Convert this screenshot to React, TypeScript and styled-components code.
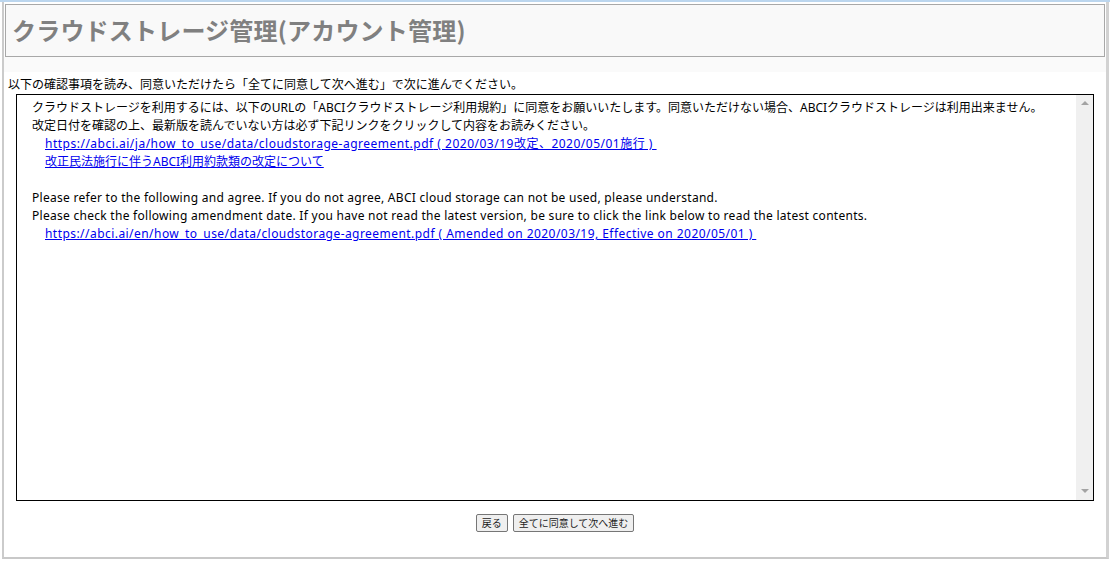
import styled, { createGlobalStyle } from 'styled-components';

const GlobalStyle = createGlobalStyle`
  html, body {
    margin: 0;
    padding: 0;
    background: #ffffff;
  }
  body {
    font-family: "Noto Sans", "Noto Sans CJK JP", sans-serif;
    font-size: 12px;
    color: #000;
  }
`;

const JA_URL = 'https://abci.ai/ja/how_to_use/data/cloudstorage-agreement.pdf';
const EN_URL = 'https://abci.ai/en/how_to_use/data/cloudstorage-agreement.pdf';

export default function App() {
  return (
    <>
      <GlobalStyle />
      <Page>
        <Frame>
          {/* タイトル */}
          <Header>
            <Title>クラウドストレージ管理(アカウント管理)</Title>
          </Header>
          <Band />

          {/* 本文 */}
          <Content>
            <Lead>以下の確認事項を読み、同意いただけたら「全てに同意して次へ進む」で次に進んでください。</Lead>
            <AgreementBox>
              <AgreementText>
                <Line>
                  クラウドストレージを利用するには、以下のURLの「ABCIクラウドストレージ利用規約」に同意をお願いいたします。同意いただけない場合、ABCIクラウドストレージは利用出来ません。
                </Line>
                <Line>改定日付を確認の上、最新版を読んでいない方は必ず下記リンクをクリックして内容をお読みください。</Line>
                <LinkLine>
                  <DocLink href="#" $spacing={0.5}>{JA_URL} ( 2020/03/19改定、2020/05/01施行 ) </DocLink>
                </LinkLine>
                <LinkLine>
                  <DocLink href="#">改正民法施行に伴うABCI利用約款類の改定について</DocLink>
                </LinkLine>
                <Line>&nbsp;</Line>
                <Line $spacing={0.28}>
                  Please refer to the following and agree. If you do not agree, ABCI cloud storage can not be used, please understand.
                </Line>
                <Line $spacing={0.28}>
                  Please check the following amendment date. If you have not read the latest version, be sure to click the link below to read the latest contents.
                </Line>
                <LinkLine>
                  <DocLink href="#" $spacing={0.45}>{EN_URL} ( Amended on 2020/03/19, Effective on 2020/05/01 ) </DocLink>
                </LinkLine>
              </AgreementText>
              <ScrollBar>
                <Arrow $dir="up" />
                <Arrow $dir="down" />
              </ScrollBar>
            </AgreementBox>

            <Actions>
              <Button type="button">戻る</Button>
              <Button type="button">全てに同意して次へ進む</Button>
            </Actions>
          </Content>
        </Frame>
      </Page>
    </>
  );
}

const Page = styled('div')`
  width: 1110px;
  height: 561px;
  border-top: 2px solid #bcd6ee;
  box-sizing: border-box;
`;

const Frame = styled('div')`
  margin-left: 2px;
  width: 1107px;
  height: 557px;
  box-sizing: border-box;
  border-left: 2px solid #cbcbcb;
  border-right: 3px solid #d2d2d2;
  border-bottom: 2px solid #c8c8c8;
  display: flex;
  flex-direction: column;
`;

const Header = styled('div')`
  margin: 2px 0 0 1px;
  width: 1100px;
  height: 53px;
  box-sizing: border-box;
  border: 1px solid #a8a8a8;
  background: #f9f9f9;
  display: flex;
  align-items: center;
  padding: 0 0 2px 6px;
`;

const Title = styled('h1')`
  margin: 0;
  font-family: "Noto Sans CJK JP", sans-serif;
  font-size: 24px;
  font-weight: 700;
  letter-spacing: 0.2px;
  color: #808080;
`;

const Band = styled('div')`
  height: 15px;
  background: #fafafa;
`;

const Content = styled('div')`
  flex: 1;
  display: flex;
  flex-direction: column;
  padding: 4px 0 0 4px;
`;

const Lead = styled('p')`
  margin: 0;
  height: 18px;
  line-height: 16px;
  font-family: "Noto Sans CJK JP", sans-serif;
  font-size: 12px;
`;

const AgreementBox = styled('div')`
  margin-left: 8px;
  width: 1078px;
  height: 407px;
  box-sizing: border-box;
  border: 1px solid #000;
  display: flex;
  background: #fff;
`;

const AgreementText = styled('div')`
  flex: 1;
  padding: 4px 0 0 15px;
  font-size: 12px;
  line-height: 18px;
`;

const Line = styled('div')<{ $spacing?: number }>`
  white-space: nowrap;
  letter-spacing: ${({ $spacing }) => $spacing ?? 0}px;
`;

const LinkLine = styled(Line)`
  padding-left: 13px;
`;

const DocLink = styled('a')<{ $spacing?: number }>`
  color: #0000ee;
  text-decoration: underline;
  white-space: pre;
  letter-spacing: ${({ $spacing }) => $spacing ?? 0}px;
`;

const ScrollBar = styled('div')`
  width: 17px;
  background: #f0f0f0;
  display: flex;
  flex-direction: column;
  justify-content: space-between;
  align-items: center;
  padding: 6px 0 7px;
`;

const Arrow = styled('div')<{ $dir: 'up' | 'down' }>`
  width: 0;
  height: 0;
  border-left: 4px solid transparent;
  border-right: 4px solid transparent;
  ${({ $dir }) =>
    $dir === 'up'
      ? 'border-bottom: 4px solid #a3a3a3;'
      : 'border-top: 4px solid #a3a3a3;'}
`;

const Actions = styled('div')`
  width: 1094px;
  display: flex;
  justify-content: center;
  gap: 5px;
  padding-top: 13px;
`;

const Button = styled('button')`
  height: 18px;
  padding: 0 5px;
  font-family: "Noto Sans CJK JP", sans-serif;
  font-size: 10px;
  line-height: 14px;
  color: #222;
  background: #efefef;
  border: 1px solid #767676;
  border-radius: 2px;
`;
